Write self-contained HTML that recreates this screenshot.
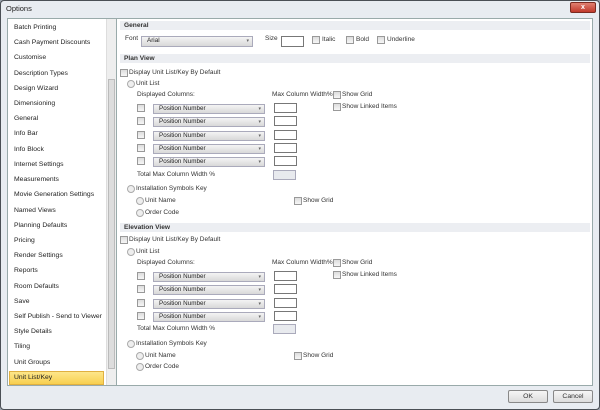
<!DOCTYPE html>
<html><head><style>
*{margin:0;padding:0;box-sizing:border-box}
body{width:600px;height:410px;background:#9aa3ad;font-family:"Liberation Sans",sans-serif;font-size:6.5px;color:#333;position:relative;overflow:hidden}
.a{position:absolute;white-space:nowrap}
#win{position:absolute;left:0;top:0;width:600px;height:410px;background:#e8ecf1;border:1px solid #4a4f55;border-radius:4px}
.side{position:absolute;left:6px;top:17px;width:109px;height:368px;background:#fff;border:1px solid #9aa;}
.si{position:absolute;left:6px;font-size:6.8px;color:#222}
.sb{position:absolute;left:98px;top:0;width:10px;height:366px;background:#eee;border-left:1px solid #ddd}
.panel{position:absolute;left:115px;top:17px;width:477px;height:368px;background:#fff;border:1px solid #9aa}
.hd{position:absolute;left:3px;width:470px;height:9px;background:#eceef2;font-weight:bold;font-size:6.6px;padding-left:4px;line-height:9px;color:#333}
.cb{position:absolute;width:8px;height:8px;border:1px solid #999;background:linear-gradient(#ddd,#f6f6f6)}
.rd{position:absolute;width:8px;height:8px;border:1px solid #aaa;border-radius:50%;background:#eee}
.dd{position:absolute;width:112px;height:10px;border:1px solid #aab;background:linear-gradient(#f4f4f4,#d8d8d8);font-size:6.3px;line-height:8px;padding-left:5px;color:#222}
.dd:after{content:"▾";position:absolute;right:3px;top:0;font-size:5px;color:#666}
.tb{position:absolute;width:23px;height:10px;border:1px solid #777;background:#fff}
.btn{position:absolute;top:389px;width:40px;height:13px;border:1px solid #888;border-radius:2px;background:linear-gradient(#f6f6f6,#dcdcdc);text-align:center;line-height:11px;font-size:6.8px}
</style></head><body>
<div id="win">
<div class="a" style="left:5px;top:3px;font-size:7.5px;color:#222">Options</div>
<div class="a" style="left:569px;top:1px;width:26px;height:11px;background:linear-gradient(#e08070,#c0392b);border:1px solid #7a2a20;border-radius:2px;color:#fff;font-size:7px;text-align:center;line-height:9px;font-weight:bold">x</div>
<div class="side">
<div class="si" style="top:5px">Batch Printing</div>
<div class="si" style="top:20px">Cash Payment Discounts</div>
<div class="si" style="top:35px">Customise</div>
<div class="si" style="top:51px">Description Types</div>
<div class="si" style="top:66px">Design Wizard</div>
<div class="si" style="top:81px">Dimensioning</div>
<div class="si" style="top:96px">General</div>
<div class="si" style="top:111px">Info Bar</div>
<div class="si" style="top:127px">Info Block</div>
<div class="si" style="top:142px">Internet Settings</div>
<div class="si" style="top:157px">Measurements</div>
<div class="si" style="top:172px">Movie Generation Settings</div>
<div class="si" style="top:188px">Named Views</div>
<div class="si" style="top:203px">Planning Defaults</div>
<div class="si" style="top:218px">Pricing</div>
<div class="si" style="top:233px">Render Settings</div>
<div class="si" style="top:248px">Reports</div>
<div class="si" style="top:264px">Room Defaults</div>
<div class="si" style="top:279px">Save</div>
<div class="si" style="top:294px">Self Publish - Send to Viewer</div>
<div class="si" style="top:309px">Style Details</div>
<div class="si" style="top:324px">Tiling</div>
<div class="si" style="top:340px">Unit Groups</div>
<div class="a" style="left:1px;top:352px;width:95px;height:14px;background:linear-gradient(#fde68a,#f8cf50);border:1px solid #e0b040"></div>
<div class="si" style="top:355px">Unit List/Key</div>
<div class="sb"><div style="position:absolute;left:1px;top:60px;width:7px;height:290px;background:#ddd;border:1px solid #bbb"></div></div>
</div>
<div class="panel">
<div class="hd" style="top:2px">General</div>
<div class="a" style="left:8px;top:16px">Font</div>
<div class="dd" style="left:24px;top:17px;width:112px;height:11px">Arial</div>
<div class="a" style="left:148px;top:16px">Size</div>
<div class="tb" style="left:164px;top:17px;height:11px">&nbsp;</div>
<div class="cb" style="left:195px;top:17px"></div><div class="a" style="left:205px;top:17px">Italic</div>
<div class="cb" style="left:229px;top:17px"></div><div class="a" style="left:239px;top:17px">Bold</div>
<div class="cb" style="left:260px;top:17px"></div><div class="a" style="left:270px;top:17px">Underline</div>

<div class="hd" style="top:35px">Plan View</div>
<div class="cb" style="left:3px;top:50px"></div><div class="a" style="left:12px;top:50px">Display Unit List/Key By Default</div>
<div class="rd" style="left:10px;top:61px"></div><div class="a" style="left:19px;top:61px">Unit List</div>
<div class="a" style="left:20px;top:72px">Displayed Columns:</div>
<div class="a" style="left:155px;top:72px">Max Column Width%</div>
<div class="cb" style="left:216px;top:72px"></div><div class="a" style="left:225px;top:72px">Show Grid</div>
<div class="cb" style="left:216px;top:84px"></div><div class="a" style="left:225px;top:84px">Show Linked Items</div>
<div class="cb" style="left:20px;top:85px"></div><div class="dd" style="left:36px;top:85px">Position Number</div><div class="tb" style="left:157px;top:84px"></div>
<div class="cb" style="left:20px;top:98px"></div><div class="dd" style="left:36px;top:98px">Position Number</div><div class="tb" style="left:157px;top:97px"></div>
<div class="cb" style="left:20px;top:112px"></div><div class="dd" style="left:36px;top:112px">Position Number</div><div class="tb" style="left:157px;top:111px"></div>
<div class="cb" style="left:20px;top:125px"></div><div class="dd" style="left:36px;top:125px">Position Number</div><div class="tb" style="left:157px;top:124px"></div>
<div class="cb" style="left:20px;top:138px"></div><div class="dd" style="left:36px;top:138px">Position Number</div><div class="tb" style="left:157px;top:137px"></div>
<div class="a" style="left:20px;top:152px">Total Max Column Width %</div><div class="tb" style="left:156px;top:151px;border-color:#aab;background:#e8eaee"></div>
<div class="rd" style="left:10px;top:166px"></div><div class="a" style="left:19px;top:166px">Installation Symbols Key</div>
<div class="rd" style="left:19px;top:178px"></div><div class="a" style="left:28px;top:178px">Unit Name</div>
<div class="cb" style="left:177px;top:178px"></div><div class="a" style="left:186px;top:178px">Show Grid</div>
<div class="rd" style="left:19px;top:190px"></div><div class="a" style="left:28px;top:190px">Order Code</div>

<div class="hd" style="top:204px">Elevation View</div>
<div class="cb" style="left:3px;top:217px"></div><div class="a" style="left:12px;top:217px">Display Unit List/Key By Default</div>
<div class="rd" style="left:10px;top:229px"></div><div class="a" style="left:19px;top:229px">Unit List</div>
<div class="a" style="left:20px;top:240px">Displayed Columns:</div>
<div class="a" style="left:155px;top:240px">Max Column Width%</div>
<div class="cb" style="left:216px;top:240px"></div><div class="a" style="left:225px;top:240px">Show Grid</div>
<div class="cb" style="left:216px;top:252px"></div><div class="a" style="left:225px;top:252px">Show Linked Items</div>
<div class="cb" style="left:20px;top:253px"></div><div class="dd" style="left:36px;top:253px">Position Number</div><div class="tb" style="left:157px;top:252px"></div>
<div class="cb" style="left:20px;top:266px"></div><div class="dd" style="left:36px;top:266px">Position Number</div><div class="tb" style="left:157px;top:265px"></div>
<div class="cb" style="left:20px;top:280px"></div><div class="dd" style="left:36px;top:280px">Position Number</div><div class="tb" style="left:157px;top:279px"></div>
<div class="cb" style="left:20px;top:293px"></div><div class="dd" style="left:36px;top:293px">Position Number</div><div class="tb" style="left:157px;top:292px"></div>
<div class="a" style="left:20px;top:306px">Total Max Column Width %</div><div class="tb" style="left:156px;top:305px;border-color:#aab;background:#e8eaee"></div>
<div class="rd" style="left:10px;top:321px"></div><div class="a" style="left:19px;top:321px">Installation Symbols Key</div>
<div class="rd" style="left:19px;top:333px"></div><div class="a" style="left:28px;top:333px">Unit Name</div>
<div class="cb" style="left:177px;top:333px"></div><div class="a" style="left:186px;top:333px">Show Grid</div>
<div class="rd" style="left:19px;top:344px"></div><div class="a" style="left:28px;top:344px">Order Code</div>
</div>
<div class="btn" style="left:507px">OK</div>
<div class="btn" style="left:552px">Cancel</div>
</div>
</body></html>
